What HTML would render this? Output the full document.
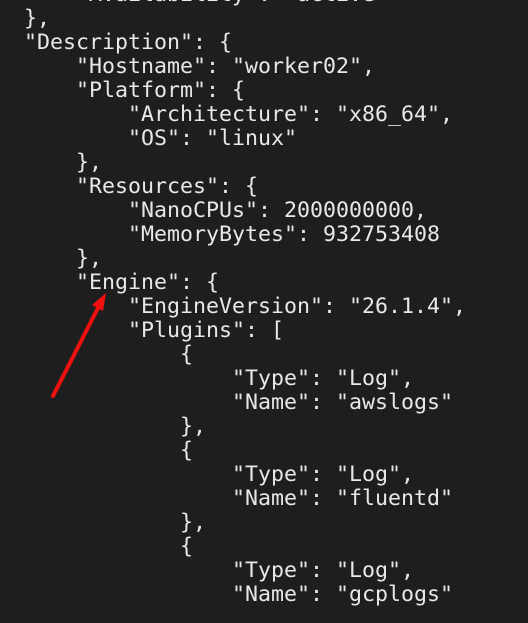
<!DOCTYPE html>
<html><head><meta charset="utf-8"><style>
html,body{margin:0;padding:0;width:528px;height:623px;overflow:hidden;background:#1e1e1e;}
pre{position:absolute;left:24px;top:-17px;margin:0;font-family:"DejaVu Sans Mono","Liberation Mono",monospace;font-size:21.6px;line-height:24px;color:#e8e8e8;}
svg{position:absolute;left:0;top:0;}
</style></head><body>
<pre>    "Availability": "active"
},
"Description": {
    "Hostname": "worker02",
    "Platform": {
        "Architecture": "x86_64",
        "OS": "linux"
    },
    "Resources": {
        "NanoCPUs": 2000000000,
        "MemoryBytes": 932753408
    },
    "Engine": {
        "EngineVersion": "26.1.4",
        "Plugins": [
            {
                "Type": "Log",
                "Name": "awslogs"
            },
            {
                "Type": "Log",
                "Name": "fluentd"
            },
            {
                "Type": "Log",
                "Name": "gcplogs"
</pre>
<svg width="528" height="623"><line x1="53" y1="396" x2="98" y2="308" stroke="#f01010" stroke-width="4" stroke-linecap="round"/><polygon points="106,293 92,305 103,311" fill="#f01010"/></svg>
</body></html>
